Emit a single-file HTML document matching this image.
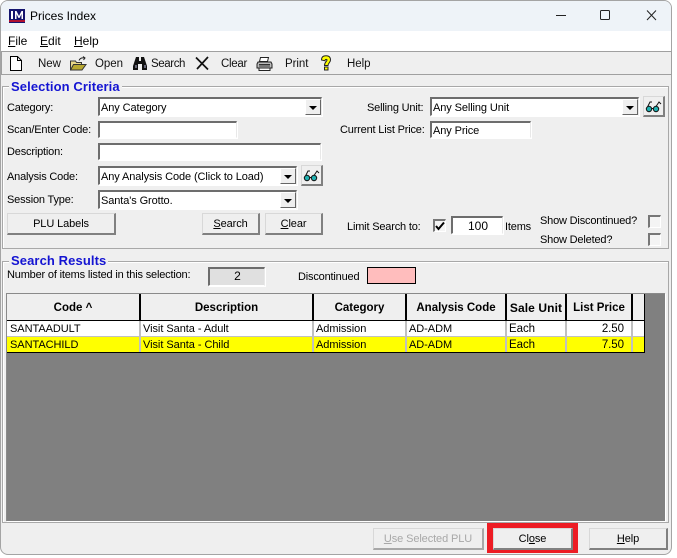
<!DOCTYPE html>
<html><head><meta charset="utf-8"><style>
html,body{margin:0;padding:0;background:#fff}
#w{position:relative;width:677px;height:558px;overflow:hidden;background:#fff;font:12px "Liberation Sans",sans-serif;color:#000}
#w div,#w span.t,#w svg{position:absolute}
.t{position:absolute;white-space:nowrap;line-height:14px;font-size:11px;letter-spacing:-.18px}
.in{background:#fff;border-top:2px solid #6d6d6d;border-left:2px solid #6d6d6d;border-right:1px solid #e8e8e8;border-bottom:1px solid #fff;box-shadow:1px 1px 0 #fff;box-sizing:border-box;font-size:11px;letter-spacing:-.1px;line-height:18px;padding-left:1px;white-space:nowrap}
.ar{right:0;top:0;bottom:0;width:16px;background:#efefef;border-left:1px solid #fff;border-top:1px solid #fff;border-right:1px solid #666;border-bottom:1px solid #666;box-sizing:border-box}
.ar:after{content:"";position:absolute;left:3px;top:6px;border-left:4px solid transparent;border-right:4px solid transparent;border-top:4px solid #000}
.b{background:#efefef;box-sizing:border-box;border-top:1px solid #d8d8d8;border-left:1px solid #d8d8d8;border-right:2px solid #808080;border-bottom:2px solid #808080;text-align:center;font-size:11px;letter-spacing:-.1px;line-height:21px;white-space:nowrap}
.gb{box-sizing:border-box;border:1px solid #a8a8a8;box-shadow:inset 1px 1px 0 #fff}
.h{font-size:11.5px;font-weight:bold;text-align:center;line-height:14px;top:301px;white-space:nowrap}
.v{width:2px;background:#000;top:294px;height:26px}
.vl{width:2px;background:#c0c0c0;top:321px;height:31px}
.c{white-space:nowrap;font-size:11px;letter-spacing:-.05px;line-height:14px}
.leg{background:#efefef;color:#1414d2;font-weight:bold;font-size:13px;line-height:16px;padding:0 2px;letter-spacing:.1px;white-space:nowrap}
.ck{background:#f4f4f4;border-top:2px solid #777;border-left:2px solid #777;border-right:1px solid #fff;border-bottom:1px solid #fff;width:10px;height:10px}
u{text-decoration:underline}
.tb{font-size:11.500px;letter-spacing:-.05px;color:#111}
</style></head><body><div id="w">
<div style="left:322px;top:0;width:44px;height:1px;background:#777"></div>
<div style="left:0;top:0;width:672px;height:555px;box-sizing:border-box;background:#efefef;border:1px solid #a4a4a4;border-radius:8px;overflow:hidden">
  <div style="left:0;top:0;width:670px;height:30px;background:#eef3f8"></div>
  <div style="left:0;top:30px;width:670px;height:20px;background:#fff"></div>
</div>
<svg style="left:9px;top:9px" width="16" height="14" viewBox="0 0 16 14"><rect width="16" height="14" fill="#14146e"/><rect y="11" width="16" height="2" fill="#b01030"/><rect x="2" y="2" width="2" height="8" fill="#fff"/><path d="M6 10V2h1.500L10 7l2.500-5H14v8h-1.500V5L10.500 9h-1L7.500 5v5z" fill="#fff"/></svg>
<span class="t" style="left:30px;top:9px;font-size:12px;letter-spacing:0">Prices Index</span>
<svg style="left:550px;top:5px" width="115" height="20" viewBox="0 0 115 20" fill="none" stroke="#222"><path d="M6 10.500h10"/><rect x="50.500" y="5.500" width="9" height="9" rx="1"/><path d="M97 5.500l9 9.500M106 5.500l-9 9.500"/></svg>
<span class="t" style="left:8px;top:34px;font-size:12px;letter-spacing:0"><u>F</u>ile</span>
<span class="t" style="left:40px;top:34px;font-size:12px;letter-spacing:0"><u>E</u>dit</span>
<span class="t" style="left:74px;top:34px;font-size:12px;letter-spacing:0"><u>H</u>elp</span>

<div style="left:1px;top:51px;width:671px;height:24px;box-sizing:border-box;border:1px solid #a0a0a0;background:#efefef"></div>
<svg style="left:9px;top:56px" width="14" height="15" viewBox="0 0 14 15"><path d="M1.500.500h7l4 4v10h-11z" fill="#fff" stroke="#000"/><path d="M8.500.500v4h4" fill="none" stroke="#000"/></svg>
<span class="t tb" style="left:38px;top:57px">New</span>
<svg style="left:70px;top:56px" width="17" height="15" viewBox="0 0 17 15"><path d="M.5 14V5h5l1 1.500h5V9" fill="#e8d888" stroke="#333"/><path d="M.5 14l3-5.500h12.500L12 14z" fill="#b8a830" stroke="#333"/><path d="M9 4.500C10 2 12 1.500 14.500 2M13 .5l2 1.500-1.500 2" fill="none" stroke="#222"/></svg>
<span class="t tb" style="left:95px;top:57px">Open</span>
<svg style="left:132px;top:56px" width="16" height="15" viewBox="0 0 16 15"><path d="M4 1h3v4h2V1h3l3 9v4H10V8H6v6H1v-4z" fill="#111"/><rect x="3" y="9" width="2" height="3" fill="#667"/><rect x="12" y="9" width="2" height="3" fill="#667"/></svg>
<span class="t tb" style="left:151px;top:57px;letter-spacing:-.4px">Search</span>
<svg style="left:195px;top:56px" width="15" height="15" viewBox="0 0 15 15" fill="none" stroke="#111" stroke-width="1.700"><path d="M1 1.500l12 12M13 1l-11 12"/></svg>
<span class="t tb" style="left:221px;top:57px;letter-spacing:-.3px">Clear</span>
<svg style="left:256px;top:56px" width="17" height="15" viewBox="0 0 17 15"><path d="M4.500 1.500h8l-1 4h-8z" fill="#fff" stroke="#222"/><path d="M2 6h13l1 2v4H1V8z" fill="#bbb" stroke="#222"/><path d="M3 12h11v2.500H3z" fill="#fff" stroke="#222"/><path d="M3 8.500h11M3 10h11" stroke="#333"/></svg>
<span class="t tb" style="left:285px;top:57px">Print</span>
<svg style="left:320px;top:55px" width="12" height="16" viewBox="0 0 12 16"><path d="M1.500 5C1.500 2 3.500.8 6 .8s4.500 1.200 4.500 4.200c0 2.300-2.500 3-2.500 5.500H4.500C4.500 7 7 6.500 7 5 7 4 5 4 5 5.800z" fill="#ff0" stroke="#222"/><rect x="4.500" y="12" width="3.500" height="3" fill="#ff0" stroke="#222"/></svg>
<span class="t tb" style="left:347px;top:57px">Help</span>

<div class="gb" style="left:2px;top:86px;width:667px;height:163px"></div>
<div class="leg" style="left:9px;top:79px">Selection Criteria</div>
<span class="t" style="left:7px;top:101px">Category:</span>
<div class="in" style="left:98px;top:97px;width:224px;height:19px">Any Category<div class="ar"></div></div>
<span class="t" style="left:7px;top:123px">Scan/Enter Code:</span>
<div class="in" style="left:98px;top:121px;width:139px;height:17px"></div>
<span class="t" style="left:7px;top:145px">Description:</span>
<div class="in" style="left:98px;top:143px;width:223px;height:17px"></div>
<span class="t" style="left:7px;top:170px">Analysis Code:</span>
<div class="in" style="left:98px;top:166px;width:199px;height:19px">Any Analysis Code (Click to Load)<div class="ar"></div></div>
<div class="b" style="left:301px;top:165px;width:22px;height:21px"></div>
<svg style="left:303px;top:169px" width="18" height="13" viewBox="0 0 18 13" fill="none" stroke="#111"><path d="M2 8L5 2h2M10 8l4-6 2 2"/><circle cx="4" cy="9" r="2.700" fill="#20b0b0"/><circle cx="11" cy="9" r="2.700" fill="#20b0b0"/><path d="M6.500 8.500h2"/></svg>
<span class="t" style="left:7px;top:193px">Session Type:</span>
<div class="in" style="left:98px;top:190px;width:199px;height:19px">Santa's Grotto.<div class="ar"></div></div>
<div class="b" style="left:7px;top:213px;width:109px;height:22px">PLU Labels</div>
<div class="b" style="left:202px;top:213px;width:58px;height:22px"><u>S</u>earch</div>
<div class="b" style="left:265px;top:213px;width:58px;height:22px"><u>C</u>lear</div>

<span class="t" style="left:367px;top:101px">Selling Unit:</span>
<div class="in" style="left:430px;top:97px;width:209px;height:19px">Any Selling Unit<div class="ar"></div></div>
<div class="b" style="left:643px;top:96px;width:22px;height:21px"></div>
<svg style="left:645px;top:100px" width="18" height="13" viewBox="0 0 18 13" fill="none" stroke="#111"><path d="M2 8L5 2h2M10 8l4-6 2 2"/><circle cx="4" cy="9" r="2.700" fill="#20b0b0"/><circle cx="11" cy="9" r="2.700" fill="#20b0b0"/><path d="M6.500 8.500h2"/></svg>
<span class="t" style="left:340px;top:123px">Current List Price:</span>
<div class="in" style="left:430px;top:121px;width:101px;height:17px;line-height:17px">Any Price</div>
<span class="t" style="left:347px;top:220px">Limit Search to:</span>
<div class="ck" style="left:433px;top:219px"></div>
<svg style="left:435px;top:221px" width="10" height="10" viewBox="0 0 10 10"><path d="M1 5l2.500 3L9 1.500" fill="none" stroke="#000" stroke-width="2"/></svg>
<div class="in" style="left:451px;top:216px;width:52px;height:18px;text-align:center;line-height:16px;font-size:12px;letter-spacing:0">100</div>
<span class="t" style="left:505px;top:220px">Items</span>
<span class="t" style="left:540px;top:214px">Show Discontinued?</span>
<div class="ck" style="left:648px;top:215px"></div>
<span class="t" style="left:540px;top:233px">Show Deleted?</span>
<div class="ck" style="left:648px;top:233px"></div>

<div class="gb" style="left:2px;top:261px;width:667px;height:262px"></div>
<div class="leg" style="left:9px;top:253px">Search Results</div>
<span class="t" style="left:7px;top:268px">Number of items listed in this selection:</span>
<div class="in" style="left:208px;top:267px;width:57px;height:19px;background:#e0e0e0;text-align:center;line-height:15px;font-size:12px;letter-spacing:0">2</div>
<span class="t" style="left:298px;top:270px">Discontinued</span>
<div style="left:367px;top:267px;width:49px;height:17px;box-sizing:border-box;background:#ffbdbd;border:1px solid #000"></div>

<div style="left:6px;top:293px;width:659px;height:228px;background:#808080;border-top:1px solid #8a8a8a;border-left:1px solid #8a8a8a;box-sizing:border-box;box-shadow:1px 1px 0 #fff"></div>
<div style="left:7px;top:294px;width:638px;height:26px;background:#efefef"></div>
<div style="left:7px;top:320px;width:638px;height:1px;background:#000"></div>
<div style="left:7px;top:321px;width:638px;height:15px;background:#fff"></div>
<div style="left:7px;top:336px;width:638px;height:1px;background:#c0c0c0"></div>
<div style="left:7px;top:337px;width:638px;height:15px;background:#ff0"></div>
<div style="left:7px;top:352px;width:638px;height:1px;background:#000"></div>
<div style="left:644px;top:294px;width:1px;height:59px;background:#000"></div>
<div class="v" style="left:139px"></div><div class="v" style="left:312px"></div><div class="v" style="left:405px"></div><div class="v" style="left:505px"></div><div class="v" style="left:565px"></div><div class="v" style="left:631px"></div>
<div class="vl" style="left:139px"></div><div class="vl" style="left:312px"></div><div class="vl" style="left:405px"></div><div class="vl" style="left:505px"></div><div class="vl" style="left:565px"></div><div class="vl" style="left:631px"></div>
<div class="h" style="left:7px;width:132px">Code ^</div>
<div class="h" style="left:141px;width:171px">Description</div>
<div class="h" style="left:314px;width:91px">Category</div>
<div class="h" style="left:407px;width:98px">Analysis Code</div>
<div class="h" style="left:507px;width:58px;font-size:12px;letter-spacing:.1px">Sale Unit</div>
<div class="h" style="left:567px;width:64px">List Price</div>
<div class="c" style="left:10px;top:322px">SANTAADULT</div><div class="c" style="left:143px;top:322px">Visit Santa - Adult</div><div class="c" style="left:316px;top:322px">Admission</div><div class="c" style="left:409px;top:322px">AD-ADM</div><div class="c" style="left:509px;top:322px;font-size:11.500px">Each</div><div class="c" style="left:567px;width:57px;text-align:right;top:322px;font-size:11.500px">2.50</div>
<div class="c" style="left:10px;top:338px">SANTACHILD</div><div class="c" style="left:143px;top:338px">Visit Santa - Child</div><div class="c" style="left:316px;top:338px">Admission</div><div class="c" style="left:409px;top:338px">AD-ADM</div><div class="c" style="left:509px;top:338px;font-size:11.500px">Each</div><div class="c" style="left:567px;width:57px;text-align:right;top:338px;font-size:11.500px">7.50</div>

<div class="b" style="left:373px;top:528px;width:111px;height:22px;color:#a8a8a8;border-color:#d8d8d8 #a8a8a8 #a8a8a8 #d8d8d8"><u>U</u>se Selected PLU</div>
<div class="b" style="left:493px;top:528px;width:80px;height:22px">Cl<u>o</u>se</div>
<div style="left:487px;top:523px;width:91px;height:30px;box-sizing:border-box;border-style:solid;border-color:#ed1c24;border-width:5px 5px 3px 6px"></div>
<div class="b" style="left:589px;top:528px;width:79px;height:22px"><u>H</u>elp</div>
</div></body></html>
